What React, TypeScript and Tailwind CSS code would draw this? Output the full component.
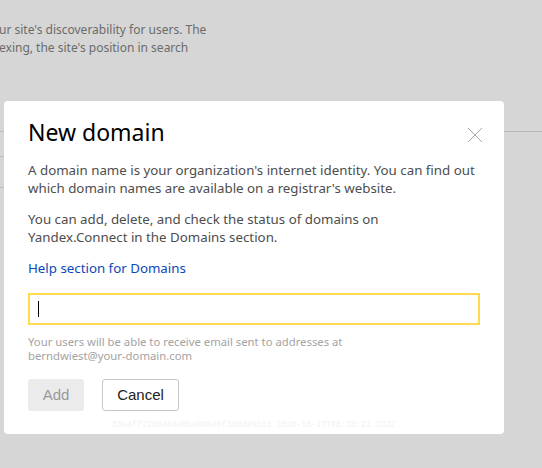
import React from "react"

/**
 * "New domain" dialog over a greyed-out settings page
 */
export default function App() {
  const [domain, setDomain] = React.useState("")

  return (
    <div className="relative h-[468px] w-[542px] overflow-hidden bg-[#d6d6d6] font-['Noto_Sans',sans-serif]">
      {/* page behind the overlay */}
      <div className="flex flex-col">
        <p className="mt-[21px] ml-[-1px] w-[230px] text-[12px] leading-[18px] text-[#6b6b6b]">
          ur site's discoverability for users. The
          <br />
          exing, the site's position in search
        </p>
        <div className="mt-[74px] h-px w-full bg-[#b8b8b8]" />
        <div className="mt-[24px] h-px w-[300px] bg-[#b8b8b8]" />
        <div className="mt-[30px] h-px w-[300px] bg-[#b8b8b8]" />
      </div>

      <div className="absolute top-[101px] left-[4px] flex w-[500px] flex-col rounded-[4px] bg-white px-[24px] pt-[16px] pb-[3px]">
        <div className="flex items-start justify-between">
          <h1 className="text-[23px] leading-[30px] text-black">New domain</h1>
          <button className="mt-[10px] mr-[-3px]" aria-label="Close">
            <svg width="16" height="16" viewBox="0 0 16 16">
              <path d="M1 1 L15 15 M15 1 L1 15" stroke="#a6a6a6" strokeWidth="1" />
            </svg>
          </button>
        </div>
        <p className="mt-[14px] text-[13.3px] leading-[18px] text-[#4d4d4d]">
          A domain name is your organization's internet identity. You can find out which
          domain names are available on a registrar's website.
        </p>
        <p className="mt-[13px] w-[360px] text-[13.3px] leading-[18px] text-[#4d4d4d]">
          You can add, delete, and check the status of domains on Yandex.Connect in the
          Domains section.
        </p>
        <a className="mt-[13px] text-[13.3px] leading-[18px] text-[#0b47b8]" href="#">
          Help section for Domains
        </a>
        <div className="relative mt-[16px] shrink-0">
          <input
            className="h-[32px] w-[452px] border-2 border-[#ffdb4d] px-[8px] text-[14px] outline-none"
            value={domain}
            onChange={e => setDomain(e.target.value)}
          />
          {!domain && <span className="absolute top-[8px] left-[10px] h-[16px] w-px bg-black" />}
        </div>
        <p className="mt-[10px] text-[11.3px] leading-[14px] text-[#a3a3a3]">
          Your users will be able to receive email sent to addresses at
          <br />
          berndwiest@your-domain.com
        </p>
        <div className="mt-[16px] flex shrink-0 gap-[18px] font-['Liberation_Sans',sans-serif] text-[15px]">
          <button className="h-[32px] w-[56px] rounded-[3px] bg-[#ebebeb] text-[#999]" disabled>
            Add
          </button>
          <button className="h-[32px] w-[77px] rounded-[3px] border border-[#c7c7c7] text-[#222]">
            Cancel
          </button>
        </div>
        <p className="mt-[8px] ml-[84px] whitespace-nowrap font-['Liberation_Mono',monospace] text-[8.3px] leading-[12px] text-[#f2f2f2]">
          83e4ff72d0464e0be865e0f3ddda9b1d 2020-10-17T06:33:21.233Z
        </p>
      </div>
    </div>
  )
}
